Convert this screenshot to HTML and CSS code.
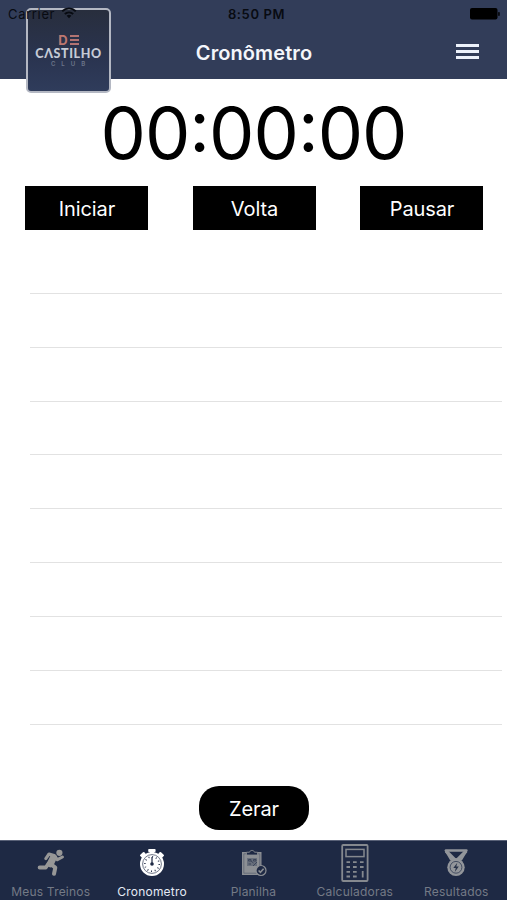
FILE: index.html
```html
<!DOCTYPE html>
<html lang="pt-BR">
<head>
    <meta charset="UTF-8">
    <meta name="viewport" content="width=device-width, initial-scale=1.0">
    <title>Cronômetro</title>
    <link rel="stylesheet" href="styles.css">
</head>
<body>
    <header class="header">
        <div class="status-bar">
            <span class="carrier">Carrier
                <svg class="wifi" width="16" height="12" viewBox="0 0 16 12">
                    <path d="M1.2 4.2a10 10 0 0 1 13.6 0M3.8 7a6.3 6.3 0 0 1 8.4 0" fill="none" stroke="#080b12" stroke-width="2"/>
                    <path d="M5.6 8.8a3.7 3.7 0 0 1 4.8 0L8 11.3z" fill="#080b12"/>
                </svg>
            </span>
            <span class="time">8:50 PM</span>
            <svg class="battery" width="30" height="12" viewBox="0 0 30 12">
                <rect width="27.5" height="11.5" rx="2"/>
                <rect x="28.2" y="4" width="1.5" height="4" rx=".7"/>
            </svg>
        </div>
        <div class="nav-bar">
            <h1 class="title">Cronômetro</h1>
            <button class="menu" aria-label="Menu"><i></i><i></i><i></i></button>
        </div>
        <div class="logo">
            <span class="logo-de">D<b><i></i><i></i><i></i></b></span>
            <span class="logo-name">CΛSTILHO</span>
            <span class="logo-club">CLUB</span>
        </div>
    </header>

    <main class="content">
        <div class="timer">00:00:00</div>
        <div class="buttons">
            <button class="btn">Iniciar</button>
            <button class="btn">Volta</button>
            <button class="btn">Pausar</button>
        </div>
        <ul class="laps">
            <li></li>
            <li></li>
            <li></li>
            <li></li>
            <li></li>
            <li></li>
            <li></li>
            <li></li>
            <li></li>
        </ul>
        <button class="btn reset">Zerar</button>
    </main>

    <nav class="tabs">
        <a class="tab">
            <svg class="icon" width="28" height="28" viewBox="0 0 28 28">
                <circle cx="22.4" cy="3.8" r="3.1" fill="#979797"/>
                <g fill="none" stroke="#979797" stroke-linecap="round" stroke-linejoin="round">
                    <path d="M8.8 9.6L12 5l5.2 1.5 3.2 4.2L25.4 8" stroke-width="3.1"/>
                    <path d="M16.4 8.6l-3 6.2" stroke-width="7"/>
                    <path d="M11.5 14.5l-2.7 4H2.6" stroke-width="3.8"/>
                    <path d="M14 15.2l4.3 3.4-1.3 6.2" stroke-width="4"/>
                </g>
            </svg>
            <span>Meus Treinos</span>
        </a>
        <a class="tab active">
            <svg class="icon" width="28" height="28" viewBox="0 0 28 28">
                <g fill="#fff">
                    <rect x="10.2" y="0" width="7.4" height="3" rx=".8"/>
                    <rect x="12" y="2.5" width="4" height="3"/>
                    <rect x="2" y="4" width="5.6" height="3.4" rx="1" transform="rotate(-43 4.8 5.7)"/>
                    <rect x="20.4" y="4" width="5.6" height="3.4" rx="1" transform="rotate(43 23.2 5.7)"/>
                    <path d="M5 6l4 4M23 6l-4 4" stroke="#fff" stroke-width="1.6"/>
                    <circle cx="14" cy="15" r="12"/>
                </g>
                <circle cx="14" cy="15" r="9.4" fill="none" stroke="#4b546a" stroke-width=".8"/>
                <circle cx="14" cy="15" r="7.2" fill="none" stroke="#1e2944" stroke-width="1.6" stroke-dasharray=".9 2.87"/>
                <path d="M14 8v7" stroke="#1e2944" stroke-width="1.2"/>
                <circle cx="14" cy="15" r="1.8" fill="#1e2944"/>
            </svg>
            <span>Cronometro</span>
        </a>
        <a class="tab">
            <svg class="icon" width="28" height="28" viewBox="0 0 28 28">
                <path d="M3 3h19.500v23H3z" fill="#8c8f94"/>
                <path d="M4.800 4.800h16v19.400h-16z" fill="none" stroke="#4e576a" stroke-width=".6"/>
                <path d="M7.5 6V3.2h3a2.6 2.6 0 0 1 5 0h3V6z" fill="#1e2944" stroke="#8c8f94" stroke-width=".8"/>
                <path d="M8 9h10v8H8z" fill="#686f7c"/>
                <path d="M9.500 10.500H12V12H9.500zM14.500 10.500H17V12h-2.500zM9.500 15H12M12 12l2.500 2M14 17l4-4" fill="none" stroke="#3c465b" stroke-width="1"/>
                <circle cx="22" cy="21.500" r="5" fill="#1e2944" stroke="#8c8f94" stroke-width="1.200"/>
                <path d="M19.600 21.500l1.800 1.800 3.200-3.500" fill="none" stroke="#8c8f94" stroke-width="1.600"/>
            </svg>
            <span>Planilha</span>
        </a>
        <a class="tab">
            <svg class="icon" width="28" height="38" viewBox="0 0 28 38">
                <g fill="none" stroke="#85898f">
                    <rect x="1.2" y="1" width="25.4" height="36" rx="1" stroke-width="1.8"/>
                    <rect x="5" y="5.4" width="18" height="7.2" stroke-width="1.5"/>
                    <path d="M5.5 18.2H9M12 18.2h3.7M19 18.2h3.6M5.5 23H9M12 23h3.7M19 23h3.6M5.5 27.8H9M12 27.8h3.7M5.5 32.5H9M12 32.5h3.7M21.7 27v6.5" stroke-width="1.8"/>
                </g>
            </svg>
            <span>Calculadoras</span>
        </a>
        <a class="tab">
            <svg class="icon" width="28" height="28" viewBox="0 0 28 28">
                <g fill="none" stroke="#92959a">
                    <path d="M3.7 1.5h20.8l-5.3 9H9z" stroke-width="2.4" stroke-linejoin="round"/>
                    <path d="M4 2l9 9M24.2 2l-9 9" stroke-width="3.2"/>
                </g>
                <circle cx="14" cy="18.3" r="8.7" fill="#92959a"/>
                <circle cx="14" cy="18.3" r="5.9" fill="none" stroke="#3b455b" stroke-width=".9"/>
                <path d="M15.3 13.8l-4 5.2h2.5l-1 4 4-5.5h-2.5z" fill="#283249"/>
            </svg>
            <span>Resultados</span>
        </a>
    </nav>
</body>
</html>
```

FILE: styles.css
```css
* {
    box-sizing: border-box;
}
body {
    display: flex;
    flex-direction: column;
    height: 900px;
    margin: 0;
    background-color: #fff;
    font-family: Inter, "Liberation Sans", sans-serif;
    overflow: hidden;
}
button {
    padding: 0;
    border: 0;
    font-family: inherit;
}

/* Header */
.header {
    position: relative;
    height: 79px;
    background-color: #323d59;
}
.status-bar {
    display: grid;
    grid-template-columns: 1fr auto 1fr;
    align-items: center;
    height: 27px;
    padding: 0 7px 0 8px;
    color: #080b12;
    font-size: 13px;
    line-height: 28px;
}
.carrier {
    position: relative;
    z-index: 2;
    display: flex;
    align-items: center;
    gap: 6px;
    letter-spacing: 0.65px;
}
.wifi {
    margin-top: -3px;
}
.time {
    padding-left: 5px;
    font-weight: 600;
    letter-spacing: 0.6px;
}
.battery {
    justify-self: end;
}
.nav-bar {
    display: grid;
    grid-template-columns: 1fr auto 1fr;
    align-items: center;
    height: 50px;
    padding-right: 28px;
    padding-left: 28px;
}
.title {
    grid-column: 2;
    margin: 1px 0 0 1px;
    color: #f4f6fb;
    font-size: 20px;
    font-weight: 600;
    letter-spacing: 0.1px;
}
.menu {
    display: flex;
    flex-direction: column;
    justify-self: end;
    gap: 3px;
    width: 23px;
    margin-top: -2px;
    background: none;
}
.menu i {
    height: 3px;
    background-color: #edf2fb;
}
.logo {
    position: absolute;
    top: 8px;
    left: 26px;
    z-index: 1;
    display: flex;
    flex-direction: column;
    align-items: center;
    width: 85px;
    height: 85px;
    padding-top: 24px;
    border: 2px solid #b4b8c3;
    border-radius: 5px;
    background: linear-gradient(#282e3d, #2a3450 60%, #2f3c5b);
    white-space: nowrap;
}
.logo-de {
    display: flex;
    align-items: center;
    gap: 2px;
    height: 12px;
    color: #bd7770;
    font-size: 13px;
    font-weight: 700;
    line-height: 12px;
}
.logo-de b {
    display: flex;
    flex-direction: column;
    gap: 2px;
    width: 9px;
}
.logo-de b i {
    height: 2px;
    background-color: #b37472;
}
.logo-name {
    margin-top: 2px;
    color: #c5cad6;
    font-family: Lato, sans-serif;
    font-size: 12.5px;
    font-weight: 900;
    letter-spacing: 0.6px;
    line-height: 11px;
}
.logo-club {
    margin-top: 1px;
    padding-left: 5px;
    color: #6d778b;
    font-size: 6px;
    font-weight: 600;
    letter-spacing: 6px;
    line-height: 8px;
}

/* Stopwatch */
.content {
    display: flex;
    flex: 1;
    flex-direction: column;
    align-items: center;
}
/* calt keeps the colons raised between the digits */
.timer {
    height: 107px;
    color: #000;
    font-size: 72px;
    font-feature-settings: "calt" 1;
    letter-spacing: -1px;
    line-height: 107px;
    white-space: nowrap;
}
.buttons {
    display: flex;
    justify-content: space-between;
    width: 100%;
    padding: 0 24px 0 25px;
}
.btn {
    width: 123px;
    height: 44px;
    padding: 2px 0 0 1px;
    background-color: #000;
    color: #fff;
    font-size: 20px;
    letter-spacing: -0.1px;
}
.laps {
    align-self: stretch;
    margin: 10px 5px 0 30px;
    padding: 0;
    list-style: none;
}
.laps li {
    height: 53.85px;
    border-bottom: 1px solid #e2e2e2;
}
.reset {
    width: 110px;
    margin-top: 61px;
    border-radius: 20px;
}

/* Tab bar */
.tabs {
    display: grid;
    grid-template-columns: repeat(5, 1fr);
    height: 60px;
    border-top: 1px solid #596177;
    background-color: #1e2944;
}
.tab {
    display: flex;
    flex-direction: column;
    align-items: center;
    color: #747a86;
    font-size: 12px;
    letter-spacing: 0.2px;
    line-height: 14px;
}
.icon {
    flex: none;
    height: 38px;
    margin: 3px 0 3px;
}
.tab.active {
    color: #e5eaf5;
}
```
